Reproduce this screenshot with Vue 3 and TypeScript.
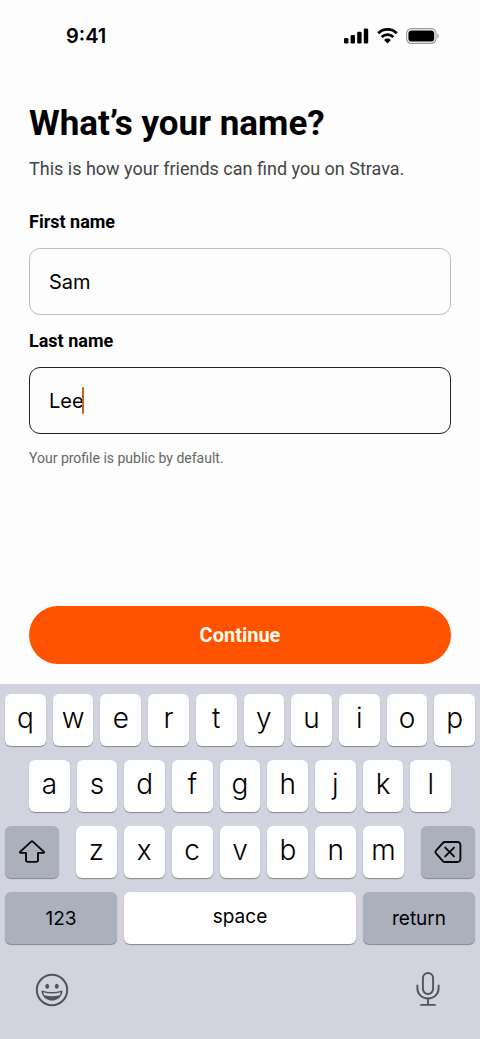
<script setup lang="ts">
import { ref } from 'vue'

type Field = 'first' | 'last'

const firstName = ref('Sam')
const lastName = ref('Lee')
const active = ref<Field>('last')

const topRow: string[] = [...'qwertyuiop']
const homeRow: string[] = [...'asdfghjkl']
const bottomRow: string[] = [...'zxcvbnm']

function target() {
  return active.value === 'first' ? firstName : lastName
}

function type(text: string) {
  target().value += text
}

function erase() {
  target().value = target().value.slice(0, -1)
}
</script>

<template>
  <div class="screen">
    <header class="status">
      <span class="time">9:41</span>
      <div class="indicators">
        <svg width="25" height="16" viewBox="0 0 25 16" aria-label="Signal">
          <rect x="0" y="10" width="4.4" height="5.5" rx="1.3" />
          <rect x="6.6" y="7" width="4.4" height="8.5" rx="1.3" />
          <rect x="13.2" y="3.8" width="4.4" height="11.7" rx="1.3" />
          <rect x="19.8" y="0.4" width="4.4" height="15.1" rx="1.3" />
        </svg>
        <svg width="21" height="16" viewBox="0 0 21 16" aria-label="Wi-Fi">
          <g fill="none" stroke="#000" stroke-width="2.7">
            <path d="M1.2 5.2a13.2 13.2 0 0 1 18.6 0" />
            <path d="M4.7 9a8.2 8.2 0 0 1 11.6 0" />
          </g>
          <path d="M10.5 15.4 7.1 12a4.8 4.8 0 0 1 6.8 0z" />
        </svg>
        <svg width="34" height="16" viewBox="0 0 34 16" aria-label="Battery">
          <rect x="0.6" y="0.6" width="29.4" height="14.8" rx="4.8" fill="none" stroke="#999" stroke-width="1.1" />
          <rect x="2.4" y="2.4" width="25.8" height="11.2" rx="3.2" />
          <path d="M31.4 5.4c1.8.7 1.8 4.5 0 5.2z" fill="#999" />
        </svg>
      </div>
    </header>

    <form class="form" @submit.prevent>
      <h1>What’s your name?</h1>
      <p class="lead">This is how your friends can find you on Strava.</p>

      <label class="label" for="first">First name</label>
      <div class="box" :class="{ active: active === 'first' }">
        <input id="first" v-model="firstName" type="text" autocomplete="off" @focus="active = 'first'" />
        <span v-if="active === 'first'" class="caret"></span>
      </div>

      <label class="label" for="last">Last name</label>
      <div class="box" :class="{ active: active === 'last' }">
        <input id="last" v-model="lastName" type="text" autocomplete="off" @focus="active = 'last'" />
        <span v-if="active === 'last'" class="caret"></span>
      </div>

      <p class="hint">Your profile is public by default.</p>
      <button class="continue" type="submit">Continue</button>
    </form>

    <section class="keyboard" aria-label="Keyboard">
      <div class="row">
        <button v-for="k in topRow" :key="k" type="button" class="key letter" @click="type(k)">{{ k }}</button>
      </div>
      <div class="row inset">
        <button v-for="k in homeRow" :key="k" type="button" class="key letter" @click="type(k)">{{ k }}</button>
      </div>
      <div class="row spread">
        <button type="button" class="key dark modifier" aria-label="Shift">
          <svg width="28" height="26" viewBox="0 0 28 26">
            <path
              d="M13.2 2.6 2.3 12.6c-.7.7-.4 1.3.4 1.3H8v7.2c0 1.2.6 1.8 1.8 1.8h8.4c1.2 0 1.8-.6 1.8-1.8v-7.2h5.3c.8 0 1.1-.6.4-1.3L14.8 2.6a1.2 1.2 0 0 0-1.6 0z"
              fill="none" stroke="#08090b" stroke-width="1.9" stroke-linejoin="round"
            />
          </svg>
        </button>
        <div class="row letters">
          <button v-for="k in bottomRow" :key="k" type="button" class="key letter" @click="type(k)">{{ k }}</button>
        </div>
        <button type="button" class="key dark modifier" aria-label="Delete" @click="erase">
          <svg width="28" height="24" viewBox="0 0 28 24" fill="none" stroke="#08090b" stroke-width="1.9" stroke-linecap="round" stroke-linejoin="round">
            <path d="M11 2h12.4a3 3 0 0 1 3 3v14a3 3 0 0 1-3 3H11a3 3 0 0 1-2.1-.9L2 13.3a1.8 1.8 0 0 1 0-2.6L8.9 2.9A3 3 0 0 1 11 2z" />
            <path d="m11.2 7.6 8.8 8.8m0-8.8-8.8 8.8" />
          </svg>
        </button>
      </div>
      <div class="row">
        <button type="button" class="key dark wide">123</button>
        <button type="button" class="key space" @click="type(' ')">space</button>
        <button type="button" class="key dark wide">return</button>
      </div>

      <div class="tools">
        <button type="button" aria-label="Emoji">
          <svg width="34" height="34" viewBox="0 0 34 34">
            <circle cx="17" cy="17" r="15.2" fill="none" stroke="#50535b" stroke-width="2" />
            <ellipse cx="12.2" cy="13.3" rx="1.9" ry="2.5" fill="#50535b" />
            <ellipse cx="21.8" cy="13.3" rx="1.9" ry="2.5" fill="#50535b" />
            <path d="M6.5 18.2c0-.6.4-.9 1-.7 6 2 13 2 19 0 .6-.2 1 .1 1 .7-.5 5.5-5 9.3-10.5 9.3S7 23.7 6.5 18.2z" fill="#50535b" />
            <path d="M8.2 19.2c5.6 1.6 12 1.6 17.6 0-.2 1.2-.6 2.200-1.200 3-4.900 1.500-10.300 1.500-15.200 0-.6-.8-1-1.800-1.200-3z" fill="#d1d4df" />
          </svg>
        </button>
        <button type="button" aria-label="Dictate">
          <svg width="34" height="36" viewBox="-5 0 34 36" fill="none" stroke="#50535b" stroke-width="1.9" stroke-linecap="round">
            <rect x="6.9" y="0.95" width="10.2" height="21" rx="5.1" />
            <path d="M1.4 13.5v2.8c0 6 4.6 10.2 10.6 10.2s10.6-4.2 10.6-10.2v-2.8M12 26.5v6M5 32.9h14" />
          </svg>
        </button>
      </div>
    </section>
  </div>
</template>

<style>
body {
  margin: 0;
  background: #fdfdfd;
}
</style>

<style scoped>
.screen {
  box-sizing: border-box;
  display: flex;
  flex-direction: column;
  min-height: 100vh;
  font-family: Roboto, "Liberation Sans", sans-serif;
  color: #000;
  background: #fdfdfd;
}

button,
input {
  margin: 0;
  padding: 0;
  border: 0;
  font-family: Inter, sans-serif;
  color: inherit;
}

button {
  cursor: pointer;
}

svg {
  display: block;
}

.status {
  display: flex;
  align-items: center;
  justify-content: space-between;
  height: 72px;
  padding: 0 40px 0 66px;
}

.time {
  font: 600 20px/24px Inter, sans-serif;
}

.indicators {
  display: flex;
  gap: 8px;
}

.form {
  display: flex;
  flex: 1;
  flex-direction: column;
  padding: 28px 29px 20px;
}

h1 {
  margin: 0;
  font-size: 35px;
  line-height: 48px;
}

.lead {
  margin: 9px 0 29px;
  font-size: 18px;
  line-height: 24px;
  color: #444;
}

.label {
  margin-bottom: 14px;
  font-size: 18px;
  font-weight: 700;
  line-height: 24px;
}

.box {
  box-sizing: border-box;
  display: flex;
  align-items: center;
  height: 67px;
  margin-bottom: 14px;
  padding: 0 19px;
  border: 1px solid #bdbdbd;
  border-radius: 11px;
}

.box.active {
  border-color: #222;
}

.box input {
  flex: 1;
  min-width: 0;
  font-size: 20px;
  line-height: 26px;
  background: none;
  outline: none;
  caret-color: transparent;
}

.box.active input {
  flex: none;
  max-width: 100%;
  field-sizing: content;
}

.caret {
  flex: none;
  width: 2px;
  height: 27px;
  margin-left: -2px;
  border-radius: 1px;
  background: #c9601f;
}

.hint {
  margin: 0 0 auto;
  font-size: 14px;
  line-height: 20px;
  color: #666;
}

.continue {
  height: 58px;
  border-radius: 29px;
  font: 700 20px/24px Roboto, "Liberation Sans", sans-serif;
  color: #fff8ec;
  background: #ff5300;
}

.keyboard {
  display: flex;
  flex-direction: column;
  gap: 14px;
  padding: 10px 5px 31px;
  background: #d1d4df;
}

.row {
  display: flex;
  gap: 7px;
}

.inset {
  padding: 0 24px;
}

.spread {
  gap: 17px;
}

.letters {
  flex: 1;
}

.key {
  display: flex;
  flex: 1;
  align-items: center;
  justify-content: center;
  min-width: 0;
  height: 52px;
  border-radius: 6px;
  font-size: 19px;
  background: #fefefe;
  box-shadow: 0 1px 1px #85878e;
}

.letter {
  padding-bottom: 4px;
  font-size: 28px;
  font-weight: 300;
}

.dark {
  background: #abb0bc;
}

.modifier {
  flex: 0 0 54px;
}

.wide {
  flex: 0 0 112px;
}

.space {
  padding-bottom: 4px;
}

.tools {
  display: flex;
  align-items: center;
  justify-content: space-between;
  margin-top: 14px;
  padding: 0 30px;
}

.tools button {
  background: none;
}
</style>
